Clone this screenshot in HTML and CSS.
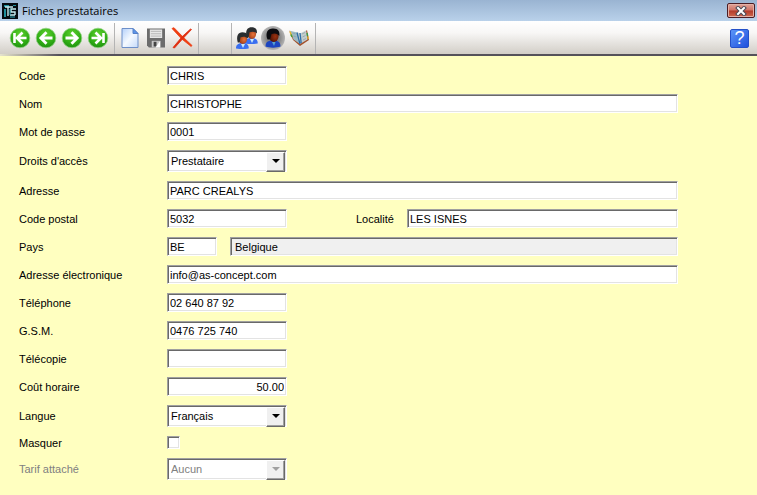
FILE: index.html
```html
<!DOCTYPE html>
<html lang="fr">
<head>
  <meta charset="UTF-8" />
  <meta name="viewport" content="width=device-width, initial-scale=1.0"/>
  <title>Fiches prestataires</title>
  <link rel="stylesheet" href="styles.css">
</head>
<body>

  <!-- shared gradients and shapes for the toolbar icons -->
  <svg class="defs" width="0" height="0" aria-hidden="true">
    <defs>
      <radialGradient id="green" cx="50%" cy="30%" r="75%">
        <stop offset="0" stop-color="#5fd030"/>
        <stop offset="0.6" stop-color="#30ae14"/>
        <stop offset="1" stop-color="#1c8c10"/>
      </radialGradient>
      <linearGradient id="paper" x1="0" y1="0" x2="1" y2="1">
        <stop offset="0" stop-color="#b4d0fa"/>
        <stop offset="0.5" stop-color="#f4f9ff"/>
        <stop offset="1" stop-color="#c4dafa"/>
      </linearGradient>
      <radialGradient id="grey">
        <stop offset="0.5" stop-color="#808080"/>
        <stop offset="1" stop-color="#b4b4b4"/>
      </radialGradient>
      <radialGradient id="face" cx="65%" cy="55%" r="70%">
        <stop offset="0" stop-color="#e8743a"/>
        <stop offset="1" stop-color="#8a2c08"/>
      </radialGradient>
      <radialGradient id="darkface" cx="65%" cy="55%" r="70%">
        <stop offset="0" stop-color="#9a3210"/>
        <stop offset="1" stop-color="#3c0c02"/>
      </radialGradient>
    </defs>
  </svg>

  <header class="titlebar">
    <svg width="16" height="16" viewBox="0 0 16 16" aria-hidden="true">
      <rect width="16" height="16" fill="#050a10"/>
      <path d="M2 2h5v2H2zM2 6h2v8H2zM11 2h3v1h-3z" fill="#1f8f9c"/>
      <path d="M3 4h8M6 4v9M8 12h5M13 12V9H9V6h5" fill="none" stroke="#c8eef2" stroke-width="1.4"/>
      <path d="M8 14h5M8 6v6" stroke="#2aa9b8"/>
    </svg>
    <h1>Fiches prestataires</h1>
    <button class="close" type="button" aria-label="Fermer">
      <svg width="12" height="10" viewBox="0 0 12 10">
        <path d="M3 2l6 6M9 2L3 8" stroke="#4a4a55" stroke-width="4" stroke-linecap="square"/>
        <path d="M3 2l6 6M9 2L3 8" stroke="#fff" stroke-width="2" stroke-linecap="square"/>
      </svg>
    </button>
  </header>

  <nav class="toolbar">
    <div class="group">
      <button type="button" aria-label="Premier">
        <svg width="22" height="22" viewBox="0 0 22 22">
          <circle cx="11" cy="11" r="9.8" fill="url(#green)" stroke="#8fcf80" stroke-width="0.8"/>
          <path d="M5.5 6v10M17.5 11H8.5M13.5 5.5L8 11l5.5 5.500" fill="none" stroke="#fff" stroke-width="2.6"/>
        </svg>
      </button>
      <button type="button" aria-label="Précédent">
        <svg width="22" height="22" viewBox="0 0 22 22">
          <circle cx="11" cy="11" r="9.8" fill="url(#green)" stroke="#8fcf80" stroke-width="0.8"/>
          <path d="M17.500 11H6.500M11.500 5.300L5.800 11l5.700 5.700" fill="none" stroke="#fff" stroke-width="2.800"/>
        </svg>
      </button>
      <button type="button" aria-label="Suivant">
        <svg width="22" height="22" viewBox="0 0 22 22">
          <circle cx="11" cy="11" r="9.8" fill="url(#green)" stroke="#8fcf80" stroke-width="0.8"/>
          <path d="M4.500 11h11M10.500 5.300l5.700 5.700-5.700 5.700" fill="none" stroke="#fff" stroke-width="2.800"/>
        </svg>
      </button>
      <button type="button" aria-label="Dernier">
        <svg width="22" height="22" viewBox="0 0 22 22">
          <circle cx="11" cy="11" r="9.8" fill="url(#green)" stroke="#8fcf80" stroke-width="0.8"/>
          <path d="M16.500 6v10M4.500 11h9M8.500 5.500L14 11l-5.500 5.500" fill="none" stroke="#fff" stroke-width="2.6"/>
        </svg>
      </button>
    </div>

    <div class="group">
      <button type="button" aria-label="Nouveau">
        <svg width="18" height="20" viewBox="0 0 18 20">
          <path d="M1 .5h11l5 5v14H1z" fill="url(#paper)" stroke="#6d8fc9"/>
          <path d="M12 .5v5h5z" fill="#5a94ea" stroke="#5580c8"/>
        </svg>
      </button>
      <button type="button" aria-label="Enregistrer">
        <svg width="18" height="20" viewBox="0 0 19 20">
          <path d="M0 0h19v20H2l-2-2z" fill="#6c6c6c"/>
          <path d="M3 1h13v9H3z" fill="#e6e6e6"/>
          <path d="M4 3h11M4 5.5h11M4 8h11" stroke="#b5b5b5"/>
          <path d="M5 13h9v7H5z" fill="#c8c8c8"/>
          <path d="M7 14h3v5H7z" fill="#444"/>
          <path d="M9 20l5-7v7z" fill="#fff"/>
        </svg>
      </button>
      <button type="button" aria-label="Supprimer">
        <svg width="22" height="22" viewBox="0 0 22 22">
          <path d="M1 1.5l2-.8L11.5 9.5 21 18.5l-.8 1L10.5 11.8z" fill="#ee3d12" stroke="#ee3d12" stroke-width="0.8"/>
          <path d="M19.5 2L11 9.8 2 20.5l1.5.5L12 11.5l8.500-9z" fill="#e02f10" stroke="#e02f10" stroke-width="0.8"/>
        </svg>
      </button>
    </div>

    <div class="group group-people">
      <button type="button" aria-label="Clients">
        <svg width="22" height="22" viewBox="0 0 22 22">
          <g id="person">
            <path d="M9 16.500c-.3-3.500 2-5.500 6.500-5.500s6.500 2 6.200 5.500c-3.500.8-9 .8-12.700 0z" fill="#3a6ff0"/>
            <path d="M14 12h4l-2 4z" fill="#c8e8fa"/>
            <ellipse cx="15.800" cy="7" rx="4.300" ry="5" fill="url(#face)"/>
            <path d="M10.800 10.500C9 4 11 .2 15.500.2s6 2.800 5.300 6.300C18.500 4.200 16 4.300 13.500 5.300l-.9 5.200z" fill="#2a2e30"/>
          </g>
          <use href="#person" x="-9" y="5"/>
        </svg>
      </button>
      <button type="button" aria-label="Prestataires">
        <svg width="24" height="24" viewBox="0 0 24 24">
          <circle cx="12" cy="12" r="12" fill="url(#grey)"/>
          <path d="M4.500 20.500c0-4.500 2.500-6 7.500-6s7.500 1.500 7.500 6c-4 1.500-11 1.500-15 0z" fill="#1d45c0"/>
          <path d="M11 16h3.500l-1.500 4z" fill="#5aa3cc"/>
          <ellipse cx="12.800" cy="10" rx="4.800" ry="6" fill="url(#darkface)"/>
          <path d="M6.500 13.500C4 7 6.500 2.500 12 2.500S19 6 18.300 10C16 7 13.500 7 10.500 8L9 13.500z" fill="#0c0c10"/>
        </svg>
      </button>
      <button type="button" aria-label="Répertoire">
        <svg width="20" height="16" viewBox="0 0 20 16">
          <path d="M0 0l4 10 7 6 9-6-2-10-1 1 1 8-7 4-5-4z" fill="#a3522d"/>
          <path d="M1 .8L8 2.500l3 11.500-6.500-4.500z" fill="#9dbac4"/>
          <path d="M8 2.500l3.500.8L17 .5l1.500 9L11 14z" fill="#c3cccd"/>
          <path d="M8 2.500L11 14M11 3l1.200 10" stroke="#2e6fa8" stroke-width="1.300"/>
          <path d="M3.500 3l3 .8M4.500 6l3 1M13 4l3-1.500M13.500 7l3-1.500M14 10l3-1.500" stroke="#8ba3ab" stroke-width="0.800"/>
          <path d="M1 1.500L3 7" stroke="#e3b62d" stroke-width="1.500"/>
          <path d="M2 4.500l1 2.500M18 3l.6 3" stroke="#3e9a44" stroke-width="1.500"/>
          <path d="M18.800 6.500l.5 2.500" stroke="#e3b62d" stroke-width="1.300"/>
        </svg>
      </button>
    </div>

    <button class="help" type="button" aria-label="Aide">?</button>
  </nav>

  <form class="sheet">
    <div class="row">
      <label for="code">Code</label>
      <input class="short" type="text" id="code" value="CHRIS">
    </div>
    <div class="row">
      <label for="nom">Nom</label>
      <input class="long" type="text" id="nom" value="CHRISTOPHE">
    </div>
    <div class="row">
      <label for="passe">Mot de passe</label>
      <input class="short" type="text" id="passe" value="0001">
    </div>
    <div class="row">
      <label for="droits">Droits d'accès</label>
      <span class="combo">
        <select id="droits"><option>Prestataire</option></select>
      </span>
    </div>
    <div class="row">
      <label for="adresse">Adresse</label>
      <input class="long" type="text" id="adresse" value="PARC CREALYS">
    </div>
    <div class="row">
      <label for="cp">Code postal</label>
      <input class="short" type="text" id="cp" value="5032">
      <label class="second" for="localite">Localité</label>
      <input class="long" type="text" id="localite" value="LES ISNES">
    </div>
    <div class="row">
      <label for="pays">Pays</label>
      <input class="tiny" type="text" id="pays" value="BE">
      <input class="long country" type="text" aria-label="Nom du pays" value="Belgique" readonly>
    </div>
    <div class="row">
      <label for="email">Adresse électronique</label>
      <input class="long" type="text" id="email" value="info@as-concept.com">
    </div>
    <div class="row">
      <label for="tel">Téléphone</label>
      <input class="short" type="text" id="tel" value="02 640 87 92">
    </div>
    <div class="row">
      <label for="gsm">G.S.M.</label>
      <input class="short" type="text" id="gsm" value="0476 725 740">
    </div>
    <div class="row">
      <label for="fax">Télécopie</label>
      <input class="short" type="text" id="fax">
    </div>
    <div class="row">
      <label for="cout">Coût horaire</label>
      <input class="short amount" type="text" id="cout" value="50.00">
    </div>
    <div class="row">
      <label for="langue">Langue</label>
      <span class="combo">
        <select id="langue"><option>Français</option></select>
      </span>
    </div>
    <div class="row">
      <label for="masquer">Masquer</label>
      <input type="checkbox" id="masquer">
    </div>
    <div class="row disabled">
      <label for="tarif">Tarif attaché</label>
      <span class="combo">
        <select id="tarif" disabled><option>Aucun</option></select>
      </span>
    </div>
  </form>

</body>
</html>
```
FILE: styles.css
```css
* {
  box-sizing: border-box;
}

body {
  margin: 0;
  min-height: 100vh;
  background-color: #ffffc0;
  font-family: "Liberation Sans", Arial, sans-serif;
  font-size: 11px;
  color: #000;
}

.defs {
  position: absolute;
}

/* title bar */
.titlebar {
  display: flex;
  align-items: center;
  height: 21px;
  padding: 0 2px;
  background: linear-gradient(#9ab4d2, #b9d1ea);
}

.titlebar h1 {
  flex: 1;
  margin: 0 0 0 4px;
  font-family: "Open Sans", "Noto Sans", sans-serif;
  font-size: 11px;
  font-weight: normal;
}

.close {
  display: flex;
  align-items: center;
  justify-content: center;
  width: 28px;
  height: 15px;
  padding: 0;
  border: 1px solid #4c1d24;
  border-radius: 2px;
  background: linear-gradient(#e0a49a, #cf7265 48%, #b23a2a 52%, #cf6a50);
  box-shadow: inset 0 0 0 1px #e3b0a6;
}

/* toolbar */
.toolbar {
  display: flex;
  align-items: center;
  height: 35px;
  padding: 1px 8px 0 5px;
  background: linear-gradient(#fff, #f8f7f6 35%, #d2cec7);
  border-bottom: 2px solid;
  border-image: linear-gradient(to right, #e8e6d0, #55525a 60px) 1;
}

.group {
  display: flex;
  height: 31px;
  padding: 0 3px 0 2px;
  border-right: 1px solid #b4b4b4;
}

.group-people {
  margin-left: 32px;
  border-left: 1px solid #b4b4b4;
}

.group button {
  display: flex;
  align-items: center;
  justify-content: center;
  width: 26px;
  padding: 0;
  border: none;
  background: none;
}

.help {
  width: 19px;
  height: 19px;
  margin-left: auto;
  padding: 0;
  border: 1px solid #2450c8;
  border-radius: 2px;
  background: linear-gradient(135deg, #5b95f8, #1f50dc);
  color: #fff;
  font-family: "Liberation Sans", Arial, sans-serif;
  font-size: 18px;
  line-height: 17px;
}

/* form */
.sheet {
  display: flex;
  flex-direction: column;
  gap: 9px;
  padding: 10px 79px 15px 19px;
}

.row {
  display: flex;
  align-items: center;
}

.row label {
  width: 148px;
}

.row .second {
  width: 51px;
  margin-left: 69px;
}

.sheet input,
.sheet select {
  margin: 0;
  border: 1px solid;
  border-color: #a0a0a0 #fff #fff #a0a0a0;
  border-radius: 0;
  background-color: #fff;
  box-shadow: inset 1px 1px #696969, inset -1px -1px #e3e3e3;
  color: #000;
  font: inherit;
  appearance: none;
}

.sheet input {
  height: 19px;
  padding: 0 2px;
}

.short {
  width: 120px;
}

.tiny {
  width: 50px;
}

.long {
  flex: 1;
  min-width: 0;
}

.sheet .country {
  margin-left: 13px;
  padding-left: 4px;
  background-color: #f0f0f0;
}

.amount {
  text-align: right;
}

.sheet input[type="checkbox"] {
  width: 13px;
  height: 13px;
  padding: 0;
}

.sheet input[type="checkbox"]:checked {
  background-color: #696969;
}

.combo {
  position: relative;
  width: 120px;
  height: 22px;
}

.sheet select {
  width: 100%;
  height: 22px;
  padding: 0 20px 0 3px;
}

/* raised drop-down button */
.combo::after {
  content: "";
  position: absolute;
  top: 2px;
  right: 2px;
  width: 17px;
  height: 18px;
  border: 1px solid;
  border-color: #fff #696969 #696969 #fff;
  box-shadow: inset -1px -1px #a0a0a0;
  background-color: #f0f0f0;
  pointer-events: none;
}

.combo::before {
  content: "";
  position: absolute;
  top: 9px;
  right: 7px;
  z-index: 1;
  border: 4px solid transparent;
  border-top-color: #000;
  border-bottom: none;
  pointer-events: none;
}

.disabled,
.disabled .combo select {
  color: #808080;
  opacity: 1;
}

.disabled .combo::before {
  border-top-color: #a0a0a0;
}
```
